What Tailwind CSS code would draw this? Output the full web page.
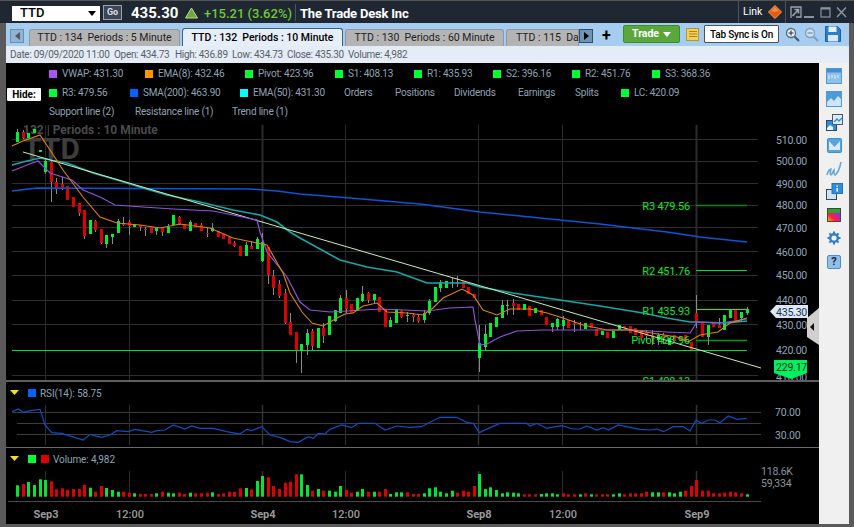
<!doctype html>
<html>
<head>
<meta charset="utf-8">
<title>TTD chart</title>
<script src="https://cdn.jsdelivr.net/npm/@tailwindcss/browser@4"></script>
</head>
<body class="m-0 w-[854px] h-[527px] overflow-hidden bg-[#5a5a5a] font-['Roboto',sans-serif] text-[11px]">
  <!-- title bar -->
  <div class="h-[23px] bg-[#1f2732] border-t border-[#555] flex items-center pl-[12px] text-white whitespace-nowrap">
    <div class="w-[88px] h-[15px] bg-white text-black text-[13px] font-medium flex items-center justify-between pl-[8px] pr-[4px] mt-[2px] shrink-0">
      <span>TTD</span>
      <span class="w-0 h-0 border-l-[4px] border-r-[4px] border-t-[5px] border-l-transparent border-r-transparent border-t-black"></span>
    </div>
    <div class="ml-[3px] mt-[1px] w-[19px] h-[15px] bg-[#3c4654] border border-[#9aa4b0] text-[9px] font-bold text-[#dde] flex items-center justify-center shrink-0">Go</div>
    <span class="ml-[9px] w-[46px] text-[15px] font-bold leading-none mt-[2px] shrink-0">435.30</span>
    <svg class="ml-[8px] mt-[1px] shrink-0" width="13" height="12" viewBox="0 0 13 12"><polygon points="6.5,1 12.5,11 0.5,11" fill="#6fa83c" stroke="#b8dc90" stroke-width="1"/></svg>
    <span class="ml-[6px] w-[87px] text-[13px] font-medium text-[#6fc93a] leading-none mt-[2px] shrink-0">+15.21 (3.62%)</span>
    <span class="ml-[4px] w-px h-[17px] bg-[#4a5462] shrink-0"></span>
    <span class="ml-[4px] text-[13px] font-bold tracking-[-0.2px] leading-none mt-[2px]">The Trade Desk Inc</span>
    <div class="ml-auto w-[116px] h-full flex items-center shrink-0">
      <span class="w-px h-[22px] bg-[#4a5462]"></span>
      <span class="ml-[4px] w-[25px] text-[10.5px]">Link</span>
      <svg width="14" height="14" viewBox="0 0 14 14"><polygon points="7,0.5 13.5,7 7,13.5 0.5,7" fill="#e8590c" stroke="#f0a070"/><polygon points="7,2 11,6 7,7 3,6" fill="#f58a3a"/></svg>
      <span class="ml-[3px] w-px h-[22px] bg-[#4a5462]"></span>
      <svg class="ml-[4px]" width="12" height="14" viewBox="0 0 12 14" fill="none" stroke="#9aa4ae" stroke-width="1.3"><path d="M1 13V2h10v10H6"/><path d="M2.5 11l5.5-6M4.5 4.5h4v4" stroke-width="1.7"/></svg>
      <svg class="ml-[2px]" width="10" height="14" viewBox="0 0 10 14"><rect x="0" y="11" width="10" height="2" fill="#8a939c"/></svg>
      <svg class="ml-[6px]" width="11" height="14" viewBox="0 0 11 14" fill="none" stroke="#8a939c" stroke-width="1.2"><rect x="1" y="3" width="9" height="9"/><path d="M1 3.5h9" stroke-width="2"/></svg>
      <svg class="ml-[5px]" width="11" height="14" viewBox="0 0 11 14" fill="none" stroke="#8a939c" stroke-width="1.6"><path d="M1 2.5l9 9.5M10 2.5L1 12"/></svg>
    </div>
  </div>

  <div class="ml-[6px] mr-[5px]">
    <!-- tab strip -->
    <div class="h-[23px] bg-[#a6cdf0] flex items-end relative text-[10.5px] text-[#222] whitespace-pre">
      <div class="absolute left-[4px] top-[6px] w-[14px] h-[14px] bg-[#8fb4d4] border border-[#6b8fae] flex items-center justify-center">
        <span class="w-0 h-0 border-t-[4px] border-b-[4px] border-r-[5px] border-t-transparent border-b-transparent border-r-[#556]"></span>
      </div>
      <div class="ml-[23px] w-[151px] h-[17px] bg-[#b4b4b4] border border-b-0 border-[#8a9aa8] rounded-t-[3px] flex items-center justify-center">TTD : 134  Periods : 5 Minute</div>
      <div class="ml-[2px] w-[161px] h-[18px] bg-[#e6eef8] border border-b-0 border-[#3f5f7f] rounded-t-[3px] flex items-center justify-center font-medium text-black">TTD : 132  Periods : 10 Minute</div>
      <div class="ml-[2px] w-[159px] h-[17px] bg-[#b4b4b4] border border-b-0 border-[#8a9aa8] rounded-t-[3px] flex items-center justify-center">TTD : 130  Periods : 60 Minute</div>
      <div class="ml-[2px] w-[73px] h-[17px] bg-[#b4b4b4] border border-b-0 border-[#8a9aa8] rounded-tl-[3px] flex items-center pl-[9px] overflow-hidden">TTD : 115  Day</div>
      <div class="absolute left-[573px] top-[6px] w-[14px] h-[14px] bg-[#6f93b5] border border-[#2f4f70] flex items-center justify-center">
        <span class="w-0 h-0 border-t-[4px] border-b-[4px] border-l-[5px] border-t-transparent border-b-transparent border-l-black"></span>
      </div>
      <span class="absolute left-[596px] top-[1px] text-[16px] font-bold text-black">+</span>
      <div class="absolute left-[617px] top-[2px] w-[57px] h-[18px] bg-[#5aa83c] border border-[#3f8a2c] rounded-[2px] flex items-center justify-center gap-[4px] text-white font-bold">
        <span>Trade</span>
        <span class="w-0 h-0 border-l-[4px] border-r-[4px] border-t-[5px] border-l-transparent border-r-transparent border-t-white"></span>
      </div>
      <svg class="absolute left-[680px] top-[5px]" width="13" height="13" viewBox="0 0 13 13"><rect x="0.5" y="0.5" width="12" height="12" fill="#f2cf5a" stroke="#b8962e"/><path d="M3 3.5h8M3 6h8M3 8.5h8" stroke="#a8862a"/></svg>
      <div class="absolute left-[698px] top-[2px] w-[75px] h-[18px] bg-white border border-[#456] rounded-[1px] flex items-center justify-center text-black font-medium text-[10px] tracking-[-0.2px]">Tab Sync is On</div>
      <svg class="absolute left-[779px] top-[4px]" width="15" height="15" viewBox="0 0 15 15" fill="none"><circle cx="6" cy="6" r="4.5" fill="#e8f0f8" stroke="#5a6a7a" stroke-width="1.3"/><path d="M9.5 9.5l4.5 4.5" stroke="#3f5f7f" stroke-width="2.2"/><path d="M3.5 6h5M6 3.5v5" stroke="#334" stroke-width="1.1"/></svg>
      <svg class="absolute left-[798px] top-[4px]" width="15" height="15" viewBox="0 0 15 15" fill="none" opacity="0.55"><circle cx="6" cy="6" r="4.5" fill="#e8f0f8" stroke="#6a7a8a" stroke-width="1.3"/><path d="M9.5 9.5l4.5 4.5" stroke="#5f7f9f" stroke-width="2.2"/><path d="M3.5 6h5" stroke="#446" stroke-width="1.1"/></svg>
      <svg class="absolute left-[819px] top-[3px]" width="16" height="16" viewBox="0 0 16 16"><path d="M0.5 0.5h12l3 3v12H0.5z" fill="#2f7fc8" stroke="#1f5f9f"/><rect x="3.5" y="0.5" width="8" height="5.5" fill="#e8f0f8"/><rect x="3" y="9" width="10" height="6.5" fill="#d8e8f6"/></svg>
    </div>
    <!-- quote strip -->
    <div class="h-[17px] bg-[#e4ecf7] flex items-center pl-[4px] text-[10px] tracking-[-0.3px] text-[#5a5f66] whitespace-nowrap">
      <span class="w-[104px]">Date: 09/09/2020 11:00</span><span class="w-[61px]">Open: 434.73</span><span class="w-[57px]">High: 436.89</span><span class="w-[55px]">Low: 434.73</span><span class="w-[61px]">Close: 435.30</span><span>Volume: 4,982</span>
    </div>

    <div class="flex h-[461px]">
      <!-- chart column -->
      <div class="w-[813px] bg-black flex flex-col">
        <div class="h-[62px] relative text-[#8fa3b5] text-[10px] tracking-[-0.2px] leading-[19px] pt-px whitespace-nowrap">
          <div class="flex h-[19px] pl-[43px]">
            <span class="w-[96px] flex items-center gap-[5px]"><i class="w-[8px] h-[8px] bg-[#a855f7]"></i>VWAP: 431.30</span>
            <span class="w-[100px] flex items-center gap-[5px]"><i class="w-[8px] h-[8px] bg-[#ff9500]"></i>EMA(8): 432.46</span>
            <span class="w-[90px] flex items-center gap-[5px]"><i class="w-[8px] h-[8px] bg-[#00ff33]"></i>Pivot: 423.96</span>
            <span class="w-[79px] flex items-center gap-[5px]"><i class="w-[8px] h-[8px] bg-[#00ff33]"></i>S1: 408.13</span>
            <span class="w-[79px] flex items-center gap-[5px]"><i class="w-[8px] h-[8px] bg-[#00ff33]"></i>R1: 435.93</span>
            <span class="w-[79px] flex items-center gap-[5px]"><i class="w-[8px] h-[8px] bg-[#00ff33]"></i>S2: 396.16</span>
            <span class="w-[80px] flex items-center gap-[5px]"><i class="w-[8px] h-[8px] bg-[#00ff33]"></i>R2: 451.76</span>
            <span class="flex items-center gap-[5px]"><i class="w-[8px] h-[8px] bg-[#00ff33]"></i>S3: 368.36</span>
          </div>
          <div class="flex h-[19px] pl-[43px]">
            <span class="w-[81px] flex items-center gap-[5px]"><i class="w-[8px] h-[8px] bg-[#00ff33]"></i>R3: 479.56</span>
            <span class="w-[110px] flex items-center gap-[5px]"><i class="w-[8px] h-[8px] bg-[#0062ff]"></i>SMA(200): 463.90</span>
            <span class="w-[104px] flex items-center gap-[5px]"><i class="w-[8px] h-[8px] bg-[#00ffff]"></i>EMA(50): 431.30</span>
            <span class="w-[51px]">Orders</span>
            <span class="w-[59px]">Positions</span>
            <span class="w-[64px]">Dividends</span>
            <span class="w-[57px]">Earnings</span>
            <span class="w-[46px]">Splits</span>
            <span class="flex items-center gap-[5px]"><i class="w-[8px] h-[8px] bg-[#00ff33]"></i>LC: 420.09</span>
          </div>
          <div class="flex h-[19px] pl-[43px]">
            <span class="w-[86px]">Support line (2)</span>
            <span class="w-[97px]">Resistance line (1)</span>
            <span>Trend line (1)</span>
          </div>
          <div class="absolute left-[1px] top-[25px] w-[34px] h-[13px] bg-white rounded-[1px] text-black font-bold text-[10px] tracking-normal leading-[13px] text-center">Hide:</div>
        </div>
        <svg id="main" class="block" width="813" height="255" viewBox="6 125 813 255"></svg>
        <div class="h-[2px] bg-[#5f5f5f]"></div>
        <svg id="rsi" class="block" width="813" height="65" viewBox="6 382 813 65"></svg>
        <div class="h-px bg-[#6a6a6a]"></div>
        <svg id="vol" class="block" width="813" height="76" viewBox="6 448 813 76"></svg>
      </div>
      <!-- tool rail -->
      <div class="w-[30px] bg-[#f0f0f0] pt-px flex flex-col items-center">
        <div class="h-[23.25px] flex items-center"><svg width="16" height="16" viewBox="0 0 16 16"><rect x="0.5" y="0.5" width="15" height="15" fill="#8fc0e8" stroke="#4f9ad8"/><rect x="1" y="1" width="14" height="3.5" fill="#3f8ed8"/><path d="M3 7v4M6 7v3M9 7v4M12 7v3" stroke="#e8f2fa"/></svg></div>
        <div class="h-[23.25px] flex items-center"><svg width="16" height="16" viewBox="0 0 16 16"><rect x="0.5" y="0.5" width="15" height="15" fill="#4f9ad8" stroke="#4f9ad8"/><path d="M1 11l4-4 3 3 4-5 3 3v7H1z" fill="#cfe4f6"/></svg></div>
        <div class="h-[23.25px] flex items-center"><svg width="17" height="17" viewBox="0 0 17 17"><rect x="0.5" y="6.5" width="10" height="10" fill="#2f8ee0" stroke="#33475a"/><path d="M1 14l3-3 3 2v3H1z" fill="#e8f4fc"/><rect x="6.5" y="0.5" width="10" height="10" fill="#dcebf7" stroke="#4a5a6a"/><path d="M8 8l3-3 2 2 3-3" fill="none" stroke="#2f8ee0" stroke-width="1.3"/></svg></div>
        <div class="h-[23.25px] flex items-center"><svg width="15" height="15" viewBox="0 0 15 15"><rect x="0.5" y="0.5" width="14" height="14" rx="1" fill="#5aa4dc" stroke="#3f8ed0"/><path d="M2 3l5.5 6L13 3v9H2z" fill="#d8eaf8"/></svg></div>
        <div class="h-[23.25px] flex items-center"><svg width="17" height="17" viewBox="0 0 17 17" fill="none" stroke="#6aa8d8" stroke-width="1.6"><path d="M1 15c1-4 3-6 4-6-1 3-1 6 0 6s2-4 3-5c0 2 0 5 1 5 3-2 5-8 6-13"/></svg></div>
        <div class="h-[23.25px] flex items-center"><svg width="17" height="17" viewBox="0 0 17 17"><rect x="0.5" y="6.5" width="10" height="10" fill="#cfe2f2" stroke="#33475a"/><rect x="6" y="0.5" width="10.5" height="10" fill="#2f8ee0" stroke="#2a6fb0"/><path d="M11.2 2.5v1.3M11.2 5v3.5" stroke="#fff" stroke-width="1.6"/></svg></div>
        <div class="h-[23.25px] flex items-center"><svg width="14" height="14" viewBox="0 0 14 14"><defs><linearGradient id="cg" x1="0" y1="1" x2="1" y2="0"><stop offset="0" stop-color="#ffcc00"/><stop offset="0.35" stop-color="#ff2030"/><stop offset="0.6" stop-color="#c020c0"/><stop offset="1" stop-color="#1060ff"/></linearGradient></defs><rect width="14" height="14" fill="url(#cg)"/><rect width="14" height="5" fill="#2aa52a"/><rect x="0.5" y="0.5" width="13" height="13" fill="none" stroke="#444"/></svg></div>
        <div class="h-[23.25px] flex items-center"><svg width="14" height="14" viewBox="0 0 14 14"><circle cx="7" cy="7" r="3.7" fill="none" stroke="#2f7fc8" stroke-width="2.6"/><path d="M7 0.5v13M0.5 7h13M2.4 2.4l9.2 9.2M11.6 2.4l-9.2 9.2" stroke="#2f7fc8" stroke-width="2"/><circle cx="7" cy="7" r="2.6" fill="#f0f0f0"/></svg></div>
        <div class="h-[23.25px] flex items-center"><div class="w-[14px] h-[14px] bg-[#8fc0e8] border border-[#4f8ec8] rounded-[2px] text-[#1a2a3a] text-[11px] font-bold leading-[12px] text-center">?</div></div>
      </div>
    </div>
  </div>

<script>
// [colour, body top, body bottom, wick top, wick bottom] in page pixels
const candles = [
["g",132,142,129,142],["r",132,138,130,139],["g",133,138],["g",129,133],["g",150,152],
["g",161,172,158,174],["r",162,182,160,202],["r",182,189,178,194],["r",184,188,177,190],["r",186,200],
["r",197,207],["r",203,213,203,216],["r",210,236,210,239],["g",220,234],["r",221,230,220,232],
["r",229,243,229,244],["g",235,244,235,248],["g",234,237,234,244],["g",221,233,219,233],["r",223,225,217,226],
["r",222,226,220,235],["g",224,227],["r",225,227,225,231],["r",229,230,227,236],["r",227,233],
["g",228,231,228,235],["r",228,232,228,236],["g",227,233,224,233],["g",215,225],["r",217,224,216,225],
["r",224,229],["g",222,231,220,231],["r",223,227],["r",225,231,223,231],["r",233,234,228,237],
["g",228,231,223,232],["r",231,237],["r",234,239],["r",237,244],["r",243,246,241,247],
["r",246,256],["g",245,256,242,256],["r",246,249,241,249],["g",239,249,237,249],["g",242,261,233,262],
["r",247,275,247,284],["r",276,288,270,295],["r",284,296,280,298],["r",293,323,289,324],["r",322,335,313,335],
["r",332,350,332,363],["g",344,351,344,373],["g",333,345,329,355],["r",331,346,329,350],["g",328,348],
["r",328,336,323,343],["g",316,335],["g",310,321,310,322],["g",298,313,295,313],["r",298,309,290,313],
["r",304,313],["g",298,311],["g",294,301,286,302],["r",293,300,292,303],["g",294,300,294,303],
["r",297,312],["r",310,327],["g",320,327,317,327],["g",309,323],["r",311,317,310,318],
["g",315,316,312,322],["r",315,317,313,322],["r",317,321,315,323],["g",313,320,310,323],["g",301,313,299,315],
["g",287,302],["g",282,288,280,292],["g",281,288],["g",282,283,278,288],["r",282,284,276,287],
["r",281,288],["r",287,294],["r",294,298],["g",343,358,325,372],["g",334,347,325,350],
["g",323,337],["g",317,327],["g",305,318,300,318],["g",305,306,300,315],["r",303,306,299,315],
["r",304,310],["g",304,310],["r",306,316],["g",308,313],["r",310,315],
["r",317,325],["g",323,327,323,332],["g",319,327,318,330],["g",320,326,316,330],["r",320,328],
["r",323,324,320,332],["r",324,325,322,330],["g",323,329],["r",323,328],["r",329,336],
["g",331,335],["r",332,338],["g",331,338],["g",325,330],["r",326,328],
["r",326,333],["r",328,335],["r",330,338],["r",332,336,330,341],["r",335,338,330,345],
["g",335,340,333,345],["r",335,338,333,344],["g",338,345],["r",335,341],["r",336,340],
["r",335,341],["r",342,350],["r",313,322,295,328],["r",323,337],["g",325,337,325,345],
["r",322,327],["r",325,328,318,328],["g",315,330],["g",310,318],["r",310,320],
["g",312,318,312,322],["g",309,313,307,315]
];
const volumes = [
316,312,306,315,298,300,304,328,325,329,327,327,315,323,335,318,324,330,335,335,
338,340,342,342,342,340,335,338,340,338,342,338,340,340,338,337,342,340,335,335,
325,324,328,303,288,292,318,327,308,305,283,283,315,332,327,332,332,335,318,330,
338,335,327,335,335,335,327,342,337,337,337,342,342,340,
325,322,335,340,332,338,332,335,318,282,327,322,330,340,337,338,340,343,343,343,
342,340,340,343,340,343,343,343,340,343,343,343,343,343,340,343,340,340,340,335,
337,337,337,337,340,335,332,318,300,332,332,340,340,338,335,337,340,343
];
const volRed = new Set([1,6,7,8,9,10,11,12,14,15,19,20,22,23,24,26,29,30,32,33,34,36,37,38,39,40,42,45,46,47,48,49,50,53,55,59,60,63,65,66,70,71,72,
  79,80,81,82,91,92,93,98,99,100,102,104,105,106,109,110,111,112,113,116,120,121,122,123,124,125,126,127,128,129,130]);
const cx = i => Math.round(17.3 + 5.567 * i);
const pts = a => a.map(p => p.join(",")).join(" ");

const ema50 = [[12,165],[23,162],[40,158],[67,163],[93,173],[117,180],[143,188],[167,195],[200,202],[233,210],[260,215],[277,222],[290,232],[300,238],[340,260],[367,267],[397,272],[427,283],[467,283],[480,287],[513,293],[560,300],[600,306],[643,313],[667,318],[690,322],[697,322],[727,323],[747,321]];
const vwap = [[12,171],[27,165],[38,161],[50,173],[72,180],[83,190],[100,197],[115,205],[143,207],[173,209],[213,211],[233,215],[257,220],[260,232],[267,252],[287,277],[300,302],[310,310],[330,312],[347,311],[380,309],[427,311],[450,308],[473,307],[475,320],[480,345],[487,344],[500,337],[517,331],[543,330],[633,330],[667,332],[690,333],[697,322],[717,323],[727,322],[747,319]];
const ema8 = [[12,146],[23,141],[40,135],[50,150],[63,170],[83,197],[100,217],[117,223],[140,225],[160,228],[180,224],[210,228],[233,238],[257,243],[267,245],[283,273],[290,293],[302,312],[312,323],[323,326],[337,318],[345,314],[353,313],[363,306],[377,303],[387,312],[407,313],[423,315],[433,308],[443,298],[462,289],[473,295],[483,310],[497,315],[510,309],[530,309],[547,313],[563,318],[583,325],[607,330],[633,330],[677,337],[688,342],[700,335],[718,332],[730,323],[747,318]];
const sma200 = [[12,191],[37,188],[250,189],[277,191],[300,194],[350,198],[420,204],[480,212],[540,218],[600,224],[633,228],[667,232],[700,237],[747,242]];
const rsiLine = [[37,95],[55,87],[70,97],[90,92],[120,88],[135,135],[155,158],[185,160],[250,180],[270,163],[305,172],[330,165],[350,152],[385,155],[405,148],[455,157],[470,152],[495,150],[520,135],[555,147],[575,138],[600,145],[640,145],[680,155],[720,162],[740,148],[755,152],[785,140],[810,165],[840,172],[870,185],[895,187],[925,170],[940,175],[955,160],[975,162],[990,148],[1025,135],[1055,143],[1075,130],[1125,130],[1155,150],[1190,138],[1230,142],[1265,140]].map(p => [p[0]/3, 380+p[1]/3])
  .concat([[0,127],[30,112],[80,112],[110,127],[130,130],[148,158],[180,143],[210,130],[290,130],[300,138],[320,130],[350,145],[395,137],[430,147],[450,147],[470,138],[500,150],[520,143],[535,150],[565,135],[600,142],[630,148],[660,150],[680,147],[700,155],[730,140],[760,140],[780,153],[798,120],[815,130],[835,120],[855,120],[870,128],[895,108],[920,118],[950,115]].map(p => [430+p[0]/3, 380+p[1]/3]));

const axis = 'fill="#8ea4b8" font-size="10.5" letter-spacing="-0.2"';
let s = "";
// grid
[139,161,183,205,227,251,275,300,324,375].forEach(y => s += `<path d="M12 ${y}.5H758" stroke="#2e2e2e"/>`);
[45,129,345,478,562].forEach(x => s += `<path d="M${x}.5 125V380" stroke="#2a2a2a"/>`);
[262,696].forEach(x => s += `<path d="M${x}.5 125V380" stroke="#2a2a2a" stroke-width="2"/>`);
// watermark
s += `<text x="23" y="134" fill="#4a4a4a" font-size="12" font-weight="700">132 | Periods : 10 Minute</text>`;
s += `<text x="23" y="159" fill="#3d3d3d" font-size="30" font-weight="700">TTD</text>`;
// level lines
s += `<path d="M12 350.5H747" stroke="#00e020"/>`;
s += `<path d="M696 309.5H747" stroke="#00ff33"/><path d="M696 340.5H747" stroke="#009a1a" stroke-width="1.6"/>`;
s += `<path d="M696 205.5H747" stroke="#008a18" stroke-width="1.6"/><path d="M696 270.5H747" stroke="#00e020"/>`;
// candles
candles.forEach((c, i) => {
  const x = cx(i), col = c[0] == "g" ? "#00ee33" : "#e00000";
  if (c[3] !== undefined) s += `<rect x="${x}" y="${c[3]}" width="1" height="${c[4]-c[3]}" fill="#8a8a8a"/>`;
  s += `<rect x="${x-1}" y="${c[1]}" width="3" height="${Math.max(c[2]-c[1],1)}" fill="${col}"/>`;
});
// indicators
s += `<polyline points="${pts(sma200)}" fill="none" stroke="#0a55d8" stroke-width="1.4"/>`;
s += `<polyline points="${pts(ema50)}" fill="none" stroke="#15a8a8" stroke-width="1.6"/>`;
s += `<path d="M23 152L761 368" stroke="#c4efbc" stroke-width="1"/>`;
s += `<polyline points="${pts(vwap)}" fill="none" stroke="#9350e0" stroke-width="1.2"/>`;
s += `<polyline points="${pts(ema8)}" fill="none" stroke="#e08410" stroke-width="1.1"/>`;
// level captions
[["R3 479.56",210],["R2 451.76",275],["R1 435.93",315],["Pivot 423.96",344],["S1 408.13",385]].forEach(l =>
  s += `<text x="690" y="${l[1]}" text-anchor="end" fill="#0ce82c" font-size="11" letter-spacing="-0.2">${l[0]}</text>`);
// price axis
[510,500,490,480,470,460,450,440,430,420].forEach((p,i) => {
  s += `<text x="776" y="${[144,165,188,209,232,256,279,304,329,354][i]}" ${axis}>${p}.00</text>`;
});
s += `<text x="776" y="381" ${axis}>410.00</text>`;
s += `<polygon points="770,311.5 776,305 808,305 808,318 776,318" fill="#d8e8f8"/><text x="776" y="316" fill="#23313f" font-size="10.5" letter-spacing="-0.2">435.30</text>`;
s += `<polygon points="774,360 807,360 807,373 791,379 774,373" fill="#00f060"/><text x="776" y="371" fill="#06321a" font-size="10.5" letter-spacing="-0.2">229.17</text>`;
s += `<polygon points="819,308 819,345 807,337 807,318" fill="#d0d0d0"/><polygon points="814,323 814,331 810,327" fill="#111"/>`;
document.getElementById("main").innerHTML = s;

let r = "";
[412,423,434].forEach(y => r += `<path d="M${y==412?12:17} ${y}.5H761" stroke="#3c3c3c"/>`);
[45,129,345,562].forEach(x => r += `<path d="M${x}.5 405V445" stroke="#2e2e2e"/>`);
[262,478,696].forEach(x => r += `<path d="M${x}.5 405V445" stroke="#333" stroke-width="1.5"/>`);
r += `<polygon points="10,390 19,390 14.5,395" fill="#f2e21c"/><rect x="28" y="389" width="8" height="8" fill="#0062ff"/>`;
r += `<text x="40" y="396.5" fill="#8ea4b8" font-size="10" letter-spacing="-0.1">RSI(14): 58.75</text>`;
r += `<polyline points="${pts(rsiLine)}" fill="none" stroke="#0a50c8" stroke-width="1.2"/>`;
r += `<text x="775" y="416" ${axis}>70.00</text><text x="775" y="439" ${axis}>30.00</text>`;
document.getElementById("rsi").innerHTML = r;

let v = "";
[45,129,345,562].forEach(x => v += `<path d="M${x}.5 471V497" stroke="#2e2e2e"/>`);
[262,478,696].forEach(x => v += `<path d="M${x}.5 471V497" stroke="#333" stroke-width="1.5"/>`);
v += `<polygon points="10,456 19,456 14.5,461" fill="#f2e21c"/><rect x="28" y="455" width="8" height="8" fill="#00ff33"/><rect x="41" y="455" width="8" height="8" fill="#e00000"/>`;
v += `<text x="53" y="462.5" fill="#8ea4b8" font-size="10" letter-spacing="-0.1">Volume: 4,982</text>`;
volumes.forEach((z, i) => {
  const top = 380 + z/3;
  v += `<rect x="${cx(i)-1}" y="${top.toFixed(1)}" width="3" height="${(496.7-top).toFixed(1)}" fill="${volRed.has(i) ? "#e00000" : "#00e633"}"/>`;
});
v += `<path d="M8 501.5H761" stroke="#4a4a4a"/>`;
[[45,"Sep3",1],[129,"12:00",0],[262,"Sep4",1],[345,"12:00",0],[478,"Sep8",1],[562,"12:00",0],[696,"Sep9",1]].forEach(t => {
  v += `<text x="${t[0]+1}" y="518" text-anchor="middle" fill="#9a9a9a" font-size="11" font-weight="${t[2]?700:500}">${t[1]}</text>`;
});
v += `<text x="761" y="475" fill="#8a949e" font-size="10.5" letter-spacing="-0.2">118.6K</text><text x="761" y="487" fill="#8a949e" font-size="10.5" letter-spacing="-0.2">59,334</text>`;
document.getElementById("vol").innerHTML = v;
</script>
</body>
</html>
